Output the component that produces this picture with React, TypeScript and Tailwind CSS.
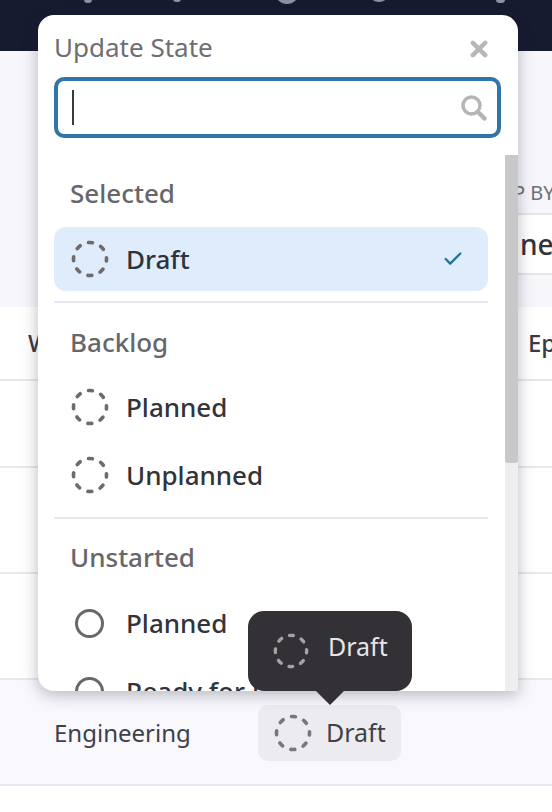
import React from 'react';
import { Check } from 'lucide-react';

function DashedCircle({ className, size = 38 }: { className: string; size?: number }) {
  return (
    <svg viewBox="0 0 38 38" width={size} height={size} fill="none" className={className}>
      <circle cx="19" cy="19" r="16.5" stroke="currentColor" strokeWidth="3.6" strokeLinecap="round" strokeDasharray="4 8.96" strokeDashoffset="2" />
    </svg>
  );
}

function StateRow({ label, icon }: { label: string; icon: 'dashed' | 'ring' }) {
  return (
    <div className="flex h-[68px] items-center pl-[33px]">
      <span className="flex w-[55px] shrink-0 items-center">
        {icon === 'dashed' ? (
          <DashedCircle className="text-[#6b6b70]" />
        ) : (
          <span className="ml-[4px] h-[29px] w-[29px] rounded-full border-[3px] border-[#68686c]" />
        )}
      </span>
      <span className="text-[26px] leading-[36px] font-medium whitespace-nowrap text-[#33333a]">{label}</span>
    </div>
  );
}

function Divider() {
  return <div className="mx-[16px] h-[2px] bg-[#e4e7ed]" />;
}

function GroupTitle({ children }: { children: React.ReactNode }) {
  return <div className="pl-[32px] text-[26px] leading-[32px] font-medium text-[#66666b]">{children}</div>;
}

function StatePopover() {
  return (
    <div className="absolute top-[15px] left-[38px] flex h-[676px] w-[480px] flex-col overflow-hidden rounded-[16px] rounded-br-none bg-white shadow-[0_4px_16px_rgba(30,30,50,0.3)]">
      <div className="flex h-[62px] shrink-0 items-start justify-between pt-[14px] pr-[30px] pl-[16px]">
        <span className="text-[26px] leading-[36px] text-[#6e6e73]">Update State</span>
        <svg viewBox="0 0 16 16" width="18" height="18" className="mt-[11px] text-[#b7b7ba]">
          <path d="M2.5 2.5 13.5 13.5M13.5 2.5 2.5 13.5" stroke="currentColor" strokeWidth="4" strokeLinecap="round" />
        </svg>
      </div>
      <div className="mr-[17px] ml-[16px] flex h-[61px] shrink-0 items-center justify-between rounded-[10px] border-[4px] border-[#3176a9] pr-[10px] pl-[14px]">
        <span className="h-[35px] w-[2px] bg-[#3a3a40]" />
        <svg viewBox="0 0 26 26" width="26" height="26" fill="none" className="text-[#b5b5b8]">
          <circle cx="10.5" cy="10.5" r="8.5" stroke="currentColor" strokeWidth="3.5" />
          <path d="M17 17 23.5 23.5" stroke="currentColor" strokeWidth="4.5" strokeLinecap="round" />
        </svg>
      </div>
      <div className="relative mt-[17px] min-h-0 flex-1 overflow-hidden pr-[14px]">
        <div className="absolute top-0 right-0 bottom-0 w-[13px] bg-[#eeedf0]">
          <div className="h-[308px] rounded-b-[3px] bg-[#c8c7ca]" />
        </div>
        <div className="pt-[22px]">
          <GroupTitle>Selected</GroupTitle>
          <div className="mx-[16px] mt-[18px] flex h-[64px] items-center rounded-[12px] bg-[#dfecfb] pr-[24px]">
            <span className="flex w-[72px] shrink-0 items-center justify-center">
              <DashedCircle className="text-[#75696a]" />
            </span>
            <span className="flex-1 text-[26px] font-medium text-[#2c3440]">Draft</span>
            <Check size={22} strokeWidth={2.5} className="text-[#1f7399]" />
          </div>
          <div className="mt-[10px]">
            <Divider />
          </div>
          <div className="mt-[23px]">
            <GroupTitle>Backlog</GroupTitle>
          </div>
          <div className="mt-[15px]">
            <StateRow label="Planned" icon="dashed" />
            <StateRow label="Unplanned" icon="dashed" />
          </div>
          <div className="mt-[8px]">
            <Divider />
          </div>
          <div className="mt-[22px]">
            <GroupTitle>Unstarted</GroupTitle>
          </div>
          <div className="mt-[16px]">
            <StateRow label="Planned" icon="ring" />
            <StateRow label="Ready for Dev" icon="ring" />
          </div>
        </div>
      </div>
    </div>
  );
}

function DraftTooltip() {
  return (
    <div className="absolute top-[611px] left-[248px] flex h-[80px] w-[164px] items-center rounded-[16px] bg-[#333136] pl-[25px]">
      <DashedCircle size={36} className="text-[#a3a3a6]" />
      <span className="-mt-[8px] ml-[19px] text-[25px] text-[#e6e6e8]">Draft</span>
      <span className="absolute top-full left-[68px] h-0 w-0 border-t-[14px] border-r-[14px] border-l-[14px] border-t-[#333136] border-r-transparent border-l-transparent" />
    </div>
  );
}

export default function App() {
  return (
    <div className="relative h-[812px] w-[552px] overflow-hidden bg-white font-['Noto_Sans',sans-serif]">
      <div className="relative h-[51px] overflow-hidden bg-[#161b30]">
        <span className="absolute -top-[4px] left-[84px] h-[7px] w-[8px] rounded-full bg-[#8c8fa6]" />
        <span className="absolute -top-[4px] left-[173px] h-[6px] w-[8px] rounded-full bg-[#8c8fa6]" />
        <span className="absolute -top-[20px] left-[275px] h-[24px] w-[24px] rounded-full bg-[#8c8fa6]" />
        <span className="absolute -top-[20px] left-[368px] h-[22px] w-[22px] rounded-full bg-[#8c8fa6]" />
        <span className="absolute -top-[4px] left-[496px] h-[7px] w-[9px] rounded-full bg-[#8c8fa6]" />
      </div>

      <div className="flex h-[256px] flex-col items-end bg-[#f6f6fb]">
        <div className="mt-[129px] w-[39px] overflow-hidden text-[20px] leading-[26px] whitespace-nowrap text-[#707075]">P BY</div>
        <div className="mt-[7px] flex h-[62px] w-[40px] items-center overflow-hidden border-y-2 border-[#e5e5ea] bg-white text-[28px] font-medium text-[#33333a]">
          <span className="ml-[8px]">ne</span>
        </div>
      </div>

      <div className="flex h-[74px] items-center justify-between border-b-2 border-[#e6e8ef] bg-white pl-[28px] text-[24px] font-medium text-[#3a3a40]">
        <span>Work</span>
        <span className="w-[24px] overflow-hidden">Epic</span>
      </div>
      <div className="h-[87px] border-b-2 border-[#e6e8ef] bg-white" />
      <div className="h-[106px] border-b-2 border-[#e6e8ef] bg-white" />
      <div className="h-[106px] border-b-2 border-[#e6e8ef] bg-white" />
      <div className="flex h-[106px] items-center border-b-2 border-[#e6e8ef] bg-[#f8f8fd] pt-[2px] pl-[54px]">
        <span className="w-[204px] text-[24px] text-[#3f3f46]">Engineering</span>
        <div className="flex h-[56px] w-[143px] items-center rounded-[10px] bg-[#ececf0] pl-[16px]">
          <DashedCircle size={38} className="text-[#77777c]" />
          <span className="ml-[14px] text-[25px] text-[#3f3f46]">Draft</span>
        </div>
      </div>

      <StatePopover />
      <DraftTooltip />
    </div>
  );
}
